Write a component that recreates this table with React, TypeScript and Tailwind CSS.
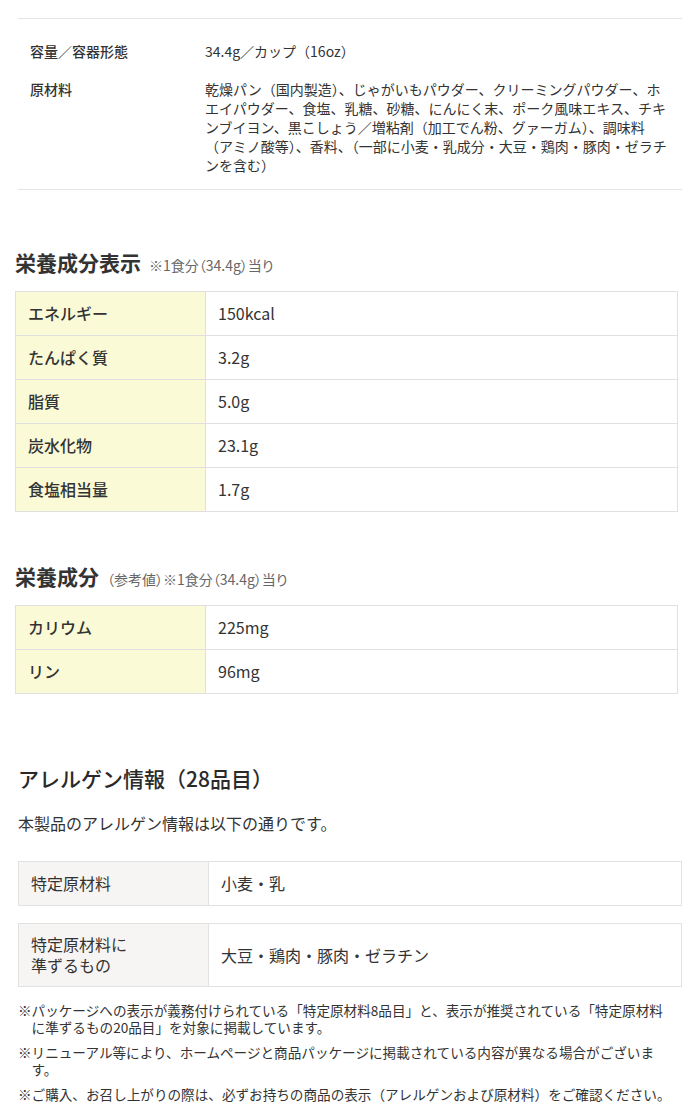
import React from "react";

const font = { fontFamily: '"Noto Sans CJK JP", "Noto Sans", sans-serif' };

const nutrition = [
  ["エネルギー", "150kcal"],
  ["たんぱく質", "3.2g"],
  ["脂質", "5.0g"],
  ["炭水化物", "23.1g"],
  ["食塩相当量", "1.7g"],
];

const minerals = [
  ["カリウム", "225mg"],
  ["リン", "96mg"],
];

function NutritionTable({ rows }: { rows: string[][] }) {
  return (
    <div className="ml-[15px] mr-[17px] mt-[12px] border border-[#e0e0e0]">
      {rows.map(([label, value], i) => (
        <div
          key={label}
          className={`flex text-[16px] leading-[21px] ${i > 0 ? "border-t border-[#e0e0e0]" : ""}`}
        >
          <div className="w-[190px] shrink-0 border-r border-[#e0e0e0] bg-[#fafad7] px-3 py-[11px] font-medium">
            {label}
          </div>
          <div className="px-3 py-[11px]">{value}</div>
        </div>
      ))}
    </div>
  );
}

export default function App() {
  return (
    <div className="w-[695px] bg-white pb-6 text-[#333]" style={font}>
      {/* spec block */}
      <div className="ml-[18px] mr-[13px] mt-[18px] border-y border-[#e5e5e5] pb-[14px] pl-3 pt-[23px] text-[14px] leading-[19px]">
        <div className="flex">
          <div className="w-[175px] shrink-0 font-medium">容量／容器形態</div>
          <div>34.4g／カップ（16oz）</div>
        </div>
        <div className="mt-[19px] flex">
          <div className="w-[175px] shrink-0 font-medium">原材料</div>
          <div className="whitespace-nowrap">
            乾燥パン（国内製造）、じゃがいもパウダー、クリーミングパウダー、ホ
            <br />
            エイパウダー、食塩、乳糖、砂糖、にんにく末、ポーク風味エキス、チキ
            <br />
            ンブイヨン、黒こしょう／増粘剤（加工でん粉、グァーガム）、調味料
            <br />
            （アミノ酸等）、香料、（一部に小麦・乳成分・大豆・鶏肉・豚肉・ゼラチ
            <br />
            ンを含む）
          </div>
        </div>
      </div>

      {/* nutrition */}
      <h2 className="mx-[15px] mt-[58px] flex items-baseline text-[21px] font-bold leading-[28px]">
        栄養成分表示
        <span className="ml-2 text-[14px] font-normal text-[#666] [font-feature-settings:'palt']">
          ※1食分（34.4g）当り
        </span>
      </h2>
      <NutritionTable rows={nutrition} />

      <h2 className="mx-[15px] mt-[50px] flex items-baseline text-[21px] font-bold leading-[28px]">
        栄養成分
        <span className="ml-2 text-[14px] font-normal text-[#666] [font-feature-settings:'palt']">
          （参考値）※1食分（34.4g）当り
        </span>
      </h2>
      <NutritionTable rows={minerals} />

      {/* allergen */}
      <div className="ml-[18px] mr-[13px]">
        <h2 className="mt-[70px] text-[21px] font-medium leading-[28px] text-[#2a2a2a]">アレルゲン情報（28品目）</h2>
        <p className="mt-[19px] text-[16px] leading-[24px]">本製品のアレルゲン情報は以下の通りです。</p>

        <div className="mt-[26px] flex border border-[#e2e2e2] text-[16px] leading-[21px]">
          <div className="w-[190px] shrink-0 border-r border-[#e2e2e2] bg-[#f6f5f3] px-3 py-[11px]">特定原材料</div>
          <div className="flex items-center px-3 py-[11px]">小麦・乳</div>
        </div>
        <div className="mt-[17px] flex border border-[#e2e2e2] text-[16px] leading-[21px]">
          <div className="w-[190px] shrink-0 border-r border-[#e2e2e2] bg-[#f6f5f3] px-3 py-[10px]">
            特定原材料に
            <br />
            準ずるもの
          </div>
          <div className="flex items-center px-3 py-[10px]">大豆・鶏肉・豚肉・ゼラチン</div>
        </div>

        <div className="mt-[15px] text-[13.6px] leading-[17px]">
          <p className="pl-[1em] -indent-[1em]">
            ※パッケージへの表示が義務付けられている「特定原材料8品目」と、表示が推奨されている「特定原材料
            <br />
            に準ずるもの20品目」を対象に掲載しています。
          </p>
          <p className="mt-[8px] pl-[1em] -indent-[1em]">
            ※リニューアル等により、ホームページと商品パッケージに掲載されている内容が異なる場合がございま
            <br />
            す。
          </p>
          <p className="mt-[8px] pl-[1em] -indent-[1em]">
            ※ご購入、お召し上がりの際は、必ずお持ちの商品の表示（アレルゲンおよび原材料）をご確認ください。
          </p>
        </div>
      </div>
    </div>
  );
}
